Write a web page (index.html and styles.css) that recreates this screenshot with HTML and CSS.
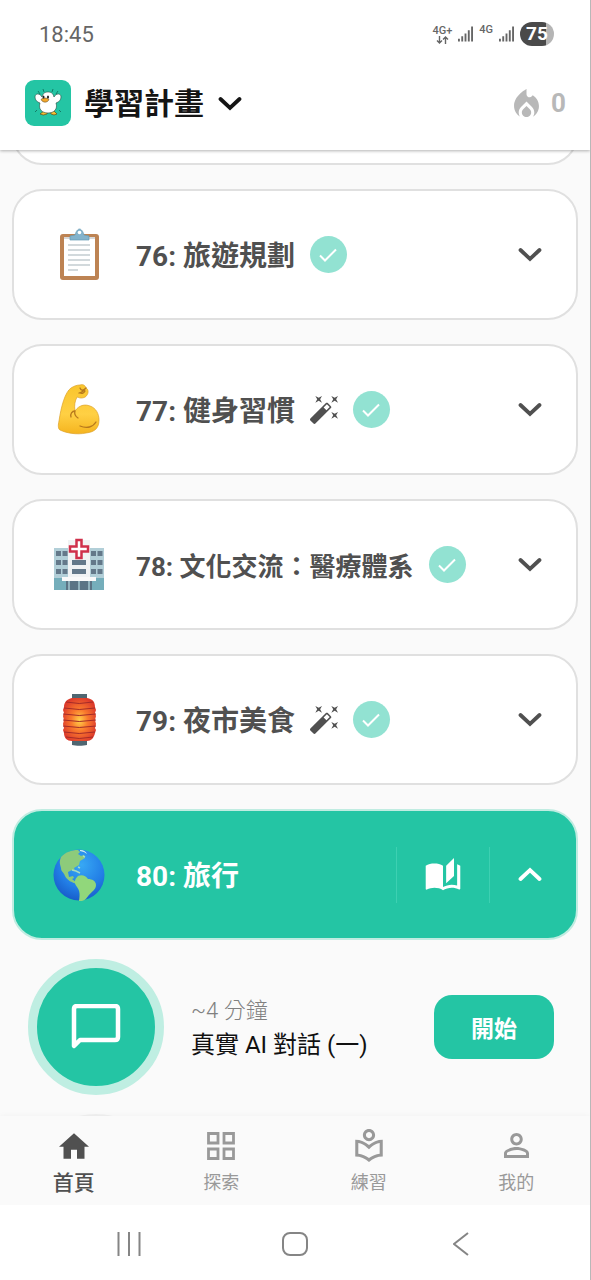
FILE: index.html
```html
<!DOCTYPE html>
<html lang="zh-Hant">
<head>
    <meta charset="UTF-8">
    <meta name="viewport" content="width=device-width, initial-scale=1.0">
    <title>學習計畫</title>
    <link rel="stylesheet" href="styles.css">
</head>
<body>
    <svg class="symbols" aria-hidden="true">
        <symbol id="down" viewBox="0 0 24 15"><path d="M2.500 3l9.500 9L21.500 3" fill="none" stroke="currentColor" stroke-width="3.800" stroke-linecap="round"/></symbol>
        <symbol id="up" viewBox="0 0 24 15"><path d="M2.500 12L12 3l9.500 9" fill="none" stroke="currentColor" stroke-width="3.800" stroke-linecap="round"/></symbol>
        <symbol id="check" viewBox="0 0 18 14"><path d="M1 7.500l5 5L17 1.500" fill="none" stroke="currentColor" stroke-width="2"/></symbol>
        <symbol id="wand" viewBox="1 2 21 21"><path fill="currentColor" d="M7.500 5.600L10 7 8.600 4.500 10 2 7.500 3.400 5 2l1.400 2.500L5 7zm12 9.800L17 14l1.400 2.500L17 19l2.500-1.400L22 19l-1.400-2.500L22 14zM22 2l-2.500 1.400L17 2l1.400 2.500L17 7l2.500-1.400L22 7l-1.400-2.500zm-7.630 5.290c-.39-.39-1.020-.39-1.410 0L1.290 18.960c-.39.39-.39 1.020 0 1.410l2.340 2.340c.39.39 1.020.39 1.410 0L16.700 11.050c.39-.39.39-1.020 0-1.410l-2.330-2.350zm-1.030 5.490l-2.120-2.120 2.440-2.440 2.120 2.120-2.440 2.440z"/></symbol>
        <symbol id="signal" viewBox="0 0 16 16"><path fill="currentColor" d="M0 13h2v3H0zM3.500 10.500h2V16h-2zM7 7.500h2V16H7zM10.500 4h2v12h-2zM14 0h2v16h-2z"/></symbol>
    </svg>

    <div class="status">
        <span class="time">18:45</span>
        <span class="network">4G+
            <svg width="13" height="8" viewBox="0 0 13 8"><path d="M3.500 0v7M1 4.500L3.500 7 6 4.500M9.500 8V1M7 3.500L9.500 1 12 3.500" fill="none" stroke="currentColor" stroke-width="1.400"/></svg>
        </span>
        <svg class="signal" width="15" height="16"><use href="#signal"/></svg>
        <span class="network second">4G</span>
        <svg class="signal" width="15" height="16"><use href="#signal"/></svg>
        <span class="battery">75</span>
    </div>

    <header class="topbar">
        <span class="logo">
            <svg width="28" height="28" viewBox="0 0 28 28">
                <path d="M6 5L4 2M10 3L9 0M18 3l1-3M22 5l2-3M3 21l-2 2M25 21l2 2" stroke="#137d67" stroke-width="1"/>
                <path d="M10 22l-4 3q3 2 7 0l1-3zM16 22l1 3q3 2 6 0l-3-3z" fill="#f3bd32" stroke="#4d3c18" stroke-width=".6"/>
                <path d="M8 8C6 4 1 4 1 8c0 3 2 5 5 6-2 6 2 10 8 10s10-4 8-10c3-1 5-3 5-6 0-4-5-4-7 0-1-4-3-5-6-5S9 4 8 8z" fill="#fff" stroke="#294b40" stroke-width=".6"/>
                <path d="M7 10.500c2-2 6-2 8 0-1 3-6 4-8 0z" fill="#f2a62d" stroke="#4d3c18" stroke-width=".5"/>
                <ellipse cx="9.500" cy="8" rx="1" ry="1.600" fill="#222"/>
                <ellipse cx="14" cy="8" rx="1" ry="1.600" fill="#222"/>
            </svg>
        </span>
        <h1>學習計畫</h1>
        <button class="icon-btn" aria-label="選擇計畫"><svg width="24" height="15"><use href="#down"/></svg></button>
        <span class="streak">
            <svg width="25" height="28" viewBox="4 2 16 18"><path fill="currentColor" d="M16 6l-.44.55C14.380 8.020 12 7.190 12 5.300V2S4 6 4 13c0 2.920 1.560 5.470 3.890 6.860-.56-.79-.89-1.760-.89-2.800 0-1.320.52-2.560 1.470-3.500L12 10.100l3.530 3.470c.95.93 1.470 2.170 1.470 3.500 0 1.020-.31 1.960-.85 2.750 1.890-1.150 3.290-3.060 3.710-5.300.66-3.550-1.070-6.900-3.860-8.520zM12 12.900l-2.130 2.090c-.56.56-.87 1.290-.87 2.070C9 18.680 10.350 20 12 20s3-1.320 3-2.940c0-.78-.31-1.520-.87-2.070L12 12.900z"/></svg>
            0
        </span>
    </header>

    <main class="list">
        <div class="card previous"></div>

        <section class="card">
            <svg class="emoji" viewBox="0 0 54 54">
                <rect x="8" y="6" width="39" height="46" rx="3" fill="#bd8353"/>
                <path d="M12 9h31v39H12z" fill="#fff"/>
                <path d="M12 9h31v2H12z" fill="#d8d8d8"/>
                <path d="M18 12V8l5-1c1-4 3-6 4.500-6S31 3 32 7l5 1v4z" fill="#82b3cc" stroke="#669bb5" stroke-width=".7"/>
                <circle cx="27.500" cy="4.500" r="1.800" fill="#fff"/>
                <path d="M16 17h22M16 22h22M16 27h22M16 32h22M16 37h22M16 42h10" stroke="#a6b3ba" stroke-width="1.200"/>
            </svg>
            <h2>76: 旅遊規劃</h2>
            <span class="done"><svg width="18" height="14"><use href="#check"/></svg></span>
            <button class="icon-btn" aria-label="展開"><svg width="24" height="15"><use href="#down"/></svg></button>
        </section>

        <section class="card">
            <svg class="emoji" viewBox="0 0 54 54">
                <defs><linearGradient id="skin" x2="0" y2="1"><stop offset="0" stop-color="#f9c52c"/><stop offset=".6" stop-color="#ffd044"/><stop offset="1" stop-color="#f5b41f"/></linearGradient></defs>
                <path d="M28 2c3-1 5 0 6 3 2 1 3 4 1 7-1 2-3 3-6 3-2 0-3-1-4-1-2 4-3 8-2 14 4-6 10-7 15-5 6 2 9 8 9 14 0 8-4 12-13 13-9 2-20 0-26-3-2-1-2-5-1-9C9 24 13 9 19 5c3-2 6-3 9-3z" fill="url(#skin)" stroke="#dda026" stroke-width=".7"/>
                <path d="M19 34c-1-3 1-6 4-6M23 28c-1 3 0 5 3 7M28 43c7 3 13 1 16-4M28 5c1 3 3 3 6 0M27 10c3-1 5-2 6-4M28 10c2 1 4 0 5-2" fill="none" stroke="#b7791d" stroke-width="1.300" stroke-linecap="round"/>
            </svg>
            <h2>77: 健身習慣</h2>
            <svg class="wand"><use href="#wand"/></svg>
            <span class="done"><svg width="18" height="14"><use href="#check"/></svg></span>
            <button class="icon-btn" aria-label="展開"><svg width="24" height="15"><use href="#down"/></svg></button>
        </section>

        <section class="card">
            <svg class="emoji" viewBox="0 0 54 54">
                <path d="M2 10h50v42H2z" fill="#b2cfd8"/>
                <path d="M16 2h22v50H16z" fill="#f1f3f4"/>
                <path d="M4 13h5v5H4zM10.500 13h5v5h-5zM39 13h5v5h-5zM45.500 13h5v5h-5zM4 22h5v5H4zM10.500 22h5v5h-5zM39 22h5v5h-5zM45.500 22h5v5h-5zM4 31h5v5H4zM10.500 31h5v5h-5zM39 31h5v5h-5zM45.500 31h5v5h-5zM20 22h14v5H20zM20 31h14v5H20z" fill="#64798a"/>
                <path d="M2 40h50v12H2z" fill="#75aebb"/>
                <path d="M10 39h34v4H10z" fill="#fafafa"/>
                <path d="M14 43h26v9H14z" fill="#5b7485"/>
                <path d="M17 43v9M27 43v9M37 43v9" stroke="#a4c6d0" stroke-width="1.500"/>
                <path d="M24.500 2h5v6.500H36v5h-6.500V20h-5v-6.500H18v-5h6.500z" fill="#fff" stroke="#cf304b" stroke-width="2.500"/>
            </svg>
            <h2 class="long">78: 文化交流：醫療體系</h2>
            <span class="done"><svg width="18" height="14"><use href="#check"/></svg></span>
            <button class="icon-btn" aria-label="展開"><svg width="24" height="15"><use href="#down"/></svg></button>
        </section>

        <section class="card">
            <svg class="emoji" viewBox="0 0 54 54">
                <defs><radialGradient id="glow" cx=".5" cy=".52" r=".55"><stop offset="0" stop-color="#ffd24a"/><stop offset=".45" stop-color="#fa7b2d"/><stop offset="1" stop-color="#dd3b2c"/></radialGradient></defs>
                <path d="M20 1h15v6H20zM20 46h15v6c-4 1-11 1-15 0z" fill="#4f6671"/>
                <path d="M20 5h15c6 1 8 4 8 9l1 3-1 3 1 3-1 4 1 4-1 4 1 2-1 3c-1 5-4 8-8 8H20c-5 0-8-3-8-8l-1-3 1-2-1-4 1-4-1-4 1-3-1-3 1-3c0-5 3-8 8-9z" fill="url(#glow)"/>
                <path d="M14 9q13 3 27 0M12 15q15 3 31 0M11 21q16 3 33 0M11 27q16 3 33 0M11 33q16 3 33 0M12 39q15 3 31 0M14 44q13 3 27 0" fill="none" stroke="#a52c28" stroke-width="1"/>
            </svg>
            <h2>79: 夜市美食</h2>
            <svg class="wand"><use href="#wand"/></svg>
            <span class="done"><svg width="18" height="14"><use href="#check"/></svg></span>
            <button class="icon-btn" aria-label="展開"><svg width="24" height="15"><use href="#down"/></svg></button>
        </section>

        <section class="card active">
            <svg class="emoji" viewBox="0 0 54 54">
                <defs><radialGradient id="sea" cx=".55" cy=".3" r=".75"><stop offset="0" stop-color="#37a8f4"/><stop offset=".6" stop-color="#227ee6"/><stop offset="1" stop-color="#1658c6"/></radialGradient></defs>
                <circle cx="27" cy="27" r="25.500" fill="url(#sea)"/>
                <path d="M9 9c5-5 10-7 17-7l2 2-2 2 3 2 3-1 1 3-5 3-1 4-5 3 1 3-3-1-4 2 1 5 4-1 1 2-2 1 4 3 3 1-1 1c-6-1-11-4-13-8-1-4-4-4-4-8-1-4-2-6 0-11z" fill="#8dcb7b"/>
                <path d="M26 28c4-2 8 0 10 3 4 0 8 2 8 6 0 5-5 7-7 10-2 2-3 5-7 6h-3c1-6 1-10-2-14-3-4-3-7 1-11z" fill="#91d77b"/>
                <path d="M28 2c4 0 6 2 7 4l-3-2-4-1z" fill="#d9f4ef"/>
                <path d="M20 22l4 1 4 2M26 19l2 1M31 8l2 1" stroke="#a6dcc2" stroke-width="1.500" fill="none"/>
            </svg>
            <h2>80: 旅行</h2>
            <button class="book-btn" aria-label="閱讀">
                <svg width="36" height="33" viewBox="1 1 22 21"><path fill="currentColor" d="M19 1l-5 5v11l5-4.500V1zM1 6v14.650c0 .25.25.5.5.5.1 0 .15-.05.25-.05C3.100 20.450 5.050 20 6.500 20c1.950 0 4.050.4 5.500 1.500V6c-1.450-1.100-3.550-1.500-5.500-1.500S2.450 4.900 1 6zm22 13.500V6c-.6-.45-1.250-.75-2-1v13.500c-1.100-.35-2.300-.5-3.500-.5-1.700 0-4.150.65-5.500 1.500v2c1.350-.85 3.800-1.500 5.500-1.500 1.650 0 3.350.3 4.750 1.050.1.05.15.05.25.05.25 0 .5-.25.5-.5v-1.100z"/></svg>
            </button>
            <button class="icon-btn" aria-label="收合"><svg width="24" height="15"><use href="#up"/></svg></button>
        </section>

        <div class="lesson">
            <span class="bubble">
                <svg width="50" height="47" viewBox="0 0 50 47"><path d="M3 42V5q0-3 3-3h38q3 0 3 3v28q0 3-3 3H9z" fill="none" stroke="currentColor" stroke-width="4.500" stroke-linejoin="round"/></svg>
            </span>
            <div class="lesson-text">
                <p class="duration">~4 分鐘</p>
                <p class="name">真實 AI 對話 (一)</p>
            </div>
            <button class="start">開始</button>
        </div>
        <div class="lesson next"><span class="bubble"></span></div>
    </main>

    <nav class="tabs">
        <a href="#" class="current">
            <svg width="30" height="26" viewBox="2 3 20 17"><path fill="currentColor" d="M10 20v-6h4v6h5v-8h3L12 3 2 12h3v8z"/></svg>
            首頁
        </a>
        <a href="#">
            <svg width="28" height="28" viewBox="0 0 28 28"><path d="M1.500 1.500h9.500v9.500H1.500zM17 1.500h9.500v9.500H17zM1.500 17h9.500v9.500H1.500zM17 17h9.500v9.500H17z" fill="none" stroke="currentColor" stroke-width="2.800"/></svg>
            探索
        </a>
        <a href="#">
            <svg width="28" height="33" viewBox="3 1 18 21.600"><path fill="currentColor" d="M16 5c0-2.210-1.790-4-4-4S8 2.790 8 5s1.790 4 4 4 4-1.790 4-4zm-4 2c-1.100 0-2-.9-2-2s.9-2 2-2 2 .9 2 2-.9 2-2 2zm0 4.540C9.640 9.350 6.480 8 3 8v11c3.480 0 6.640 1.350 9 3.550 2.360-2.200 5.520-3.550 9-3.550V8c-3.480 0-6.640 1.350-9 3.540zm7 5.640c-2.530.34-4.930 1.300-7 2.820-2.060-1.520-4.470-2.490-7-2.830v-6.950c2.100.38 4.050 1.350 5.640 2.830L12 14.280l1.360-1.270c1.590-1.480 3.540-2.450 5.640-2.830v7z"/></svg>
            練習
        </a>
        <a href="#">
            <svg width="25" height="25" viewBox="4 4 16 16"><path fill="currentColor" d="M12 5.900c1.160 0 2.100.94 2.100 2.100s-.94 2.100-2.100 2.100S9.900 9.160 9.900 8s.94-2.100 2.100-2.100m0 9c2.970 0 6.100 1.460 6.100 2.100v1.100H5.900V17c0-.64 3.130-2.100 6.100-2.100M12 4C9.790 4 8 5.790 8 8s1.790 4 4 4 4-1.790 4-4-1.790-4-4-4zm0 9c-2.670 0-8 1.340-8 4v3h16v-3c0-2.660-5.330-4-8-4z"/></svg>
            我的
        </a>
    </nav>

    <div class="system">
        <button aria-label="最近使用"><svg width="24" height="24" viewBox="0 0 24 24"><path d="M1.500 0v24M12 0v24M22.500 0v24"/></svg></button>
        <button aria-label="主畫面"><svg width="26" height="24" viewBox="0 0 26 24"><rect x="1" y="1" width="24" height="22" rx="7"/></svg></button>
        <button aria-label="返回"><svg width="16" height="24" viewBox="0 0 16 24"><path d="M15 1L1 12l14 11"/></svg></button>
    </div>
</body>
</html>
```

FILE: styles.css
```css
* {
    box-sizing: border-box;
}
body {
    display: flex;
    flex-direction: column;
    height: 100vh;
    margin: 0;
    border-right: 1px solid #b8b8b8;
    background-color: #fff;
    color: #505050;
    font-family: Roboto, "Noto Sans CJK TC", sans-serif;
}
h1, h2, p {
    margin: 0;
}
svg {
    display: block;
    flex-shrink: 0;
}
button {
    padding: 0;
    border: 0;
    background: none;
    color: inherit;
    font-family: inherit;
}
.symbols {
    display: none;
}

/* status bar */
.status {
    display: flex;
    align-items: center;
    height: 68px;
    padding: 0 36px 0 39px;
    background-color: #fff;
    color: #666;
    z-index: 2;
}
.time {
    flex: 1;
    font-size: 22px;
}
.network {
    display: flex;
    flex-direction: column;
    align-items: center;
    font-size: 11px;
    font-weight: 500;
    line-height: 11px;
}
.network.second {
    margin-bottom: 9px;
}
.signal {
    margin: 0 6px;
}
.battery {
    width: 34px;
    border-radius: 12px;
    background: linear-gradient(90deg, #4a4a4a 76%, #b5b5b5 76%);
    color: #fff;
    font-size: 19px;
    font-weight: 700;
    line-height: 24px;
    text-align: center;
}

/* title bar */
.topbar {
    display: flex;
    align-items: center;
    height: 82px;
    padding: 0 24px 12px 25px;
    background-color: #fff;
    box-shadow: 0 1px 3px rgba(0, 0, 0, 0.3);
    z-index: 1;
}
.logo {
    display: grid;
    place-items: center;
    width: 46px;
    height: 46px;
    margin-right: 13px;
    border-radius: 9px;
    background-color: #24c5a4;
}
.topbar h1 {
    margin-right: 14px;
    padding-top: 2px;
    color: #151515;
    font-size: 30px;
    font-weight: 700;
    line-height: 40px;
}
.topbar .icon-btn {
    color: #151515;
}
.streak {
    display: flex;
    align-items: center;
    gap: 12px;
    margin-left: auto;
    color: #b8b8b8;
    font-size: 26px;
    font-weight: 700;
}

/* units */
.list {
    flex: 1;
    min-height: 0;
    overflow: hidden;
    padding: 0 12px;
    background-color: #fafafa;
}
.card {
    display: flex;
    align-items: center;
    height: 131px;
    margin-bottom: 24px;
    padding: 0 34px 0 39px;
    border: 2px solid #e0e0e0;
    border-radius: 30px;
    background-color: #fff;
}
.card.previous {
    margin-top: -116px;
}
.card.active {
    margin-bottom: 19px;
    border-color: #c0ece1;
    background-color: #24c5a4;
    color: #fff;
}
.card h2 {
    padding-top: 4px;
    font-size: 28px;
    font-weight: 700;
    line-height: 40px;
}
.card h2.long {
    font-size: 26px;
}
.card .icon-btn {
    margin-left: auto;
}
.emoji {
    width: 54px;
    height: 54px;
    margin: 0 30px 0 -1px;
}
.wand {
    width: 28px;
    height: 28px;
    margin-left: 15px;
}
.done {
    display: grid;
    place-items: center;
    width: 37px;
    height: 37px;
    margin-left: 15px;
    border-radius: 50%;
    background-color: #92e2d2;
    color: #fff;
}
.book-btn {
    display: grid;
    place-items: center;
    width: 94px;
    height: 56px;
    margin-left: auto;
    border: 1px solid #3dd0b2;
    border-width: 0 1px;
}
.book-btn + .icon-btn {
    margin-left: 28px;
}

/* lesson */
.lesson {
    display: flex;
    align-items: center;
    padding: 0 24px 0 16px;
}
.bubble {
    display: grid;
    place-items: center;
    width: 136px;
    height: 136px;
    border: 9px solid #bfeee2;
    border-radius: 50%;
    background-color: #24c5a4;
    color: #fff;
}
.lesson.next {
    margin-top: 19px;
}
.next .bubble {
    border-color: #f0f0f0;
}
.lesson-text {
    flex: 1;
    margin-left: 27px;
    padding-top: 4px;
    color: #111;
}
.duration {
    color: #808080;
    font-size: 22px;
    font-weight: 300;
    line-height: 32px;
}
.name {
    font-size: 24px;
    line-height: 36px;
}
.start {
    width: 120px;
    height: 64px;
    border-radius: 18px;
    background-color: #24c5a4;
    color: #fff;
    font-size: 23px;
    font-weight: 700;
}

/* bottom tabs */
.tabs {
    display: grid;
    grid-template-columns: repeat(4, 1fr);
    height: 89px;
    background-color: #fafafa;
    box-shadow: 0 0 6px rgba(0, 0, 0, 0.04);
    z-index: 1;
}
.tabs a {
    display: grid;
    grid-template-rows: 34px 28px;
    align-content: center;
    align-items: center;
    justify-items: center;
    row-gap: 6px;
    padding-top: 4px;
    color: #999;
    font-size: 18px;
    line-height: 28px;
    text-decoration: none;
}
.tabs .current {
    color: #505050;
    font-size: 21px;
    font-weight: 500;
}

/* system buttons */
.system {
    display: grid;
    grid-template-columns: repeat(3, 1fr);
    height: 75px;
    padding: 2px 46px 0;
    background-color: #fff;
    z-index: 2;
}
.system button {
    display: grid;
    place-items: center;
}
.system svg {
    fill: none;
    stroke: #858585;
    stroke-width: 2;
}
```
